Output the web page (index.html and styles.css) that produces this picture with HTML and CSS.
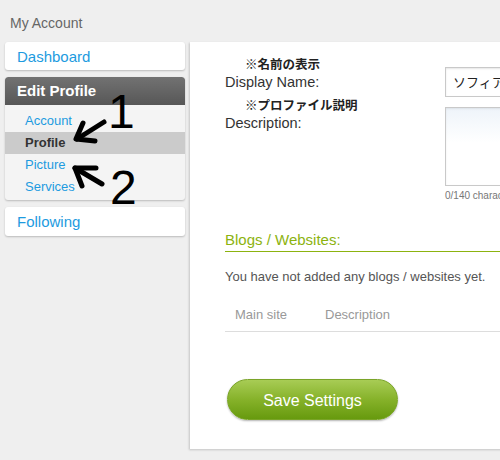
FILE: index.html
```html
<!DOCTYPE html>
<html>
<head>
<meta charset="utf-8">
<link rel="stylesheet" href="styles.css">
</head>
<body>
<div class="page">
  <div class="header">My Account</div>
  <div class="layout">
    <nav class="sidebar">
      <a class="card link">Dashboard</a>
      <div class="group">
        <div class="group-title">Edit Profile</div>
        <ul class="sublist">
          <li class="sub">Account</li>
          <li class="sub active">Profile</li>
          <li class="sub">Picture</li>
          <li class="sub">Services</li>
        </ul>
      </div>
      <a class="card link">Following</a>
    </nav>
    <main class="panel">
      <div class="form">
        <div class="label">
          <div class="jp">※名前の表示</div>
          <div class="en">Display Name:</div>
        </div>
        <div class="field">
          <div class="input">ソフィア</div>
        </div>
        <div class="label">
          <div class="jp">※プロファイル説明</div>
          <div class="en">Description:</div>
        </div>
        <div class="field">
          <div class="textarea"></div>
          <div class="counter">0/140 characters</div>
        </div>
      </div>
      <h2 class="section">Blogs / Websites:</h2>
      <p class="empty">You have not added any blogs / websites yet.</p>
      <div class="thead"><span class="th th-main">Main site</span><span class="th">Description</span></div>
      <button class="save">Save Settings</button>
    </main>
  </div>
  <div class="annot">
    <svg class="arrows" width="500" height="460" viewBox="0 0 500 460">
      <g fill="none" stroke="#000" stroke-width="5" stroke-linecap="round" stroke-linejoin="round">
        <path d="M104 122 L77 139"/>
        <path d="M83 123 L76 139 L95 141"/>
        <path d="M102 184 L75 168"/>
        <path d="M96 168 L75 168 L82 186"/>
      </g>
    </svg>
    <span class="num num1">1</span>
    <span class="num num2">2</span>
  </div>
</div>
</body>
</html>
```

FILE: styles.css
```css
* { box-sizing: border-box; }
html, body { margin: 0; padding: 0; }
body {
  background: #efefef;
  font-family: "Liberation Sans", Arial, "Noto Sans CJK JP", sans-serif;
  width: 500px;
  height: 460px;
  overflow: hidden;
}
.page { position: relative; width: 500px; height: 460px; }
.header {
  height: 42px;
  padding: 15px 0 0 10px;
  font-size: 14px;
  line-height: 16px;
  color: #666;
}
.layout {
  display: flex;
  gap: 5px;
  padding-left: 5px;
  align-items: flex-start;
}
.sidebar {
  width: 180px;
  flex: none;
  display: flex;
  flex-direction: column;
  gap: 7px;
}
.card {
  display: block;
  background: #fff;
  border-radius: 3px;
  box-shadow: 0 1px 2px rgba(0,0,0,0.22);
  height: 28px;
  line-height: 29px;
  padding-left: 12px;
  font-size: 15px;
}
.link { color: #1d9be0; }
.group {
  background: #f4f4f4;
  border-radius: 3px;
  box-shadow: 0 1px 2px rgba(0,0,0,0.22);
  overflow: hidden;
  height: 123px;
}
.group-title {
  height: 28px;
  line-height: 28px;
  padding-left: 12px;
  color: #fff;
  font-weight: bold;
  font-size: 15px;
  background: linear-gradient(#727272, #575757);
  border-radius: 3px 3px 0 0;
}
.sublist { list-style: none; margin: 0; padding: 5px 0 2px; }
.sub {
  height: 22px;
  line-height: 22px;
  padding-left: 20px;
  font-size: 13px;
  color: #1d9be0;
}
.sub.active { background: #cbcbcb; color: #333; font-weight: bold; }
.sidebar .card:last-child { height: 29px; }

.panel {
  width: 330px;
  flex: none;
  height: 407px;
  background: #fff;
  box-shadow: -1px 1px 2px rgba(0,0,0,0.18);
  padding: 14px 0 0 35px;
}
.form {
  display: grid;
  grid-template-columns: 220px 1fr;
}
.jp {
  font-family: "Noto Sans CJK JP", sans-serif;
  font-weight: bold;
  font-size: 12.5px;
  line-height: 16px;
  padding-left: 20px;
  color: #222;
}
.en {
  font-size: 14.5px;
  line-height: 18px;
  color: #333;
  margin-top: 1px;
}
.input {
  margin-top: 11px;
  width: 200px;
  height: 30px;
  border: 1px solid #c9c9c9;
  box-shadow: inset 0 1px 2px rgba(0,0,0,0.1);
  font-family: "Noto Sans CJK JP", sans-serif;
  font-size: 13px;
  line-height: 27px;
  padding-left: 7px;
  color: #222;
  white-space: nowrap;
}
.textarea {
  margin-top: 10px;
  width: 200px;
  height: 79px;
  border: 1px solid #c9c9c9;
  background: linear-gradient(#eef4fa, #fff 45%);
  box-shadow: inset 0 1px 2px rgba(0,0,0,0.08);
}
.counter {
  margin-top: 3px;
  font-size: 10px;
  line-height: 14px;
  color: #777;
  white-space: nowrap;
}
.section {
  margin: 28px 0 0;
  font-size: 15px;
  font-weight: normal;
  line-height: 18px;
  color: #8cb30f;
  padding-bottom: 2px;
  border-bottom: 1px solid #8cb30f;
}
.empty {
  margin: 17px 0 0;
  font-size: 13px;
  line-height: 16px;
  color: #555;
}
.thead {
  margin-top: 22px;
  padding: 0 0 8px 10px;
  border-bottom: 1px solid #ddd;
  font-size: 13px;
  line-height: 16px;
  color: #999;
  display: flex;
}
.th-main { width: 90px; }
.save {
  display: block;
  margin: 47px 0 0 2px;
  width: 171px;
  height: 41px;
  border: 1px solid #7aa428;
  border-radius: 21px;
  background: linear-gradient(#a8cc55, #86b22a 50%, #679a0e);
  box-shadow: 0 1px 2px rgba(0,0,0,0.3);
  color: #fff;
  font-family: "Liberation Sans", Arial, sans-serif;
  font-size: 16px;
  padding: 3px 0 0;
}
.annot { position: absolute; left: 0; top: 0; width: 500px; height: 460px; pointer-events: none; }
.arrows { position: absolute; left: 0; top: 0; }
.num {
  position: absolute;
  font-family: "Liberation Sans", Arial, sans-serif;
  font-size: 48px;
  line-height: 48px;
  color: #000;
}
.num1 { left: 108px; top: 88px; }
.num2 { left: 110px; top: 164px; }
```
